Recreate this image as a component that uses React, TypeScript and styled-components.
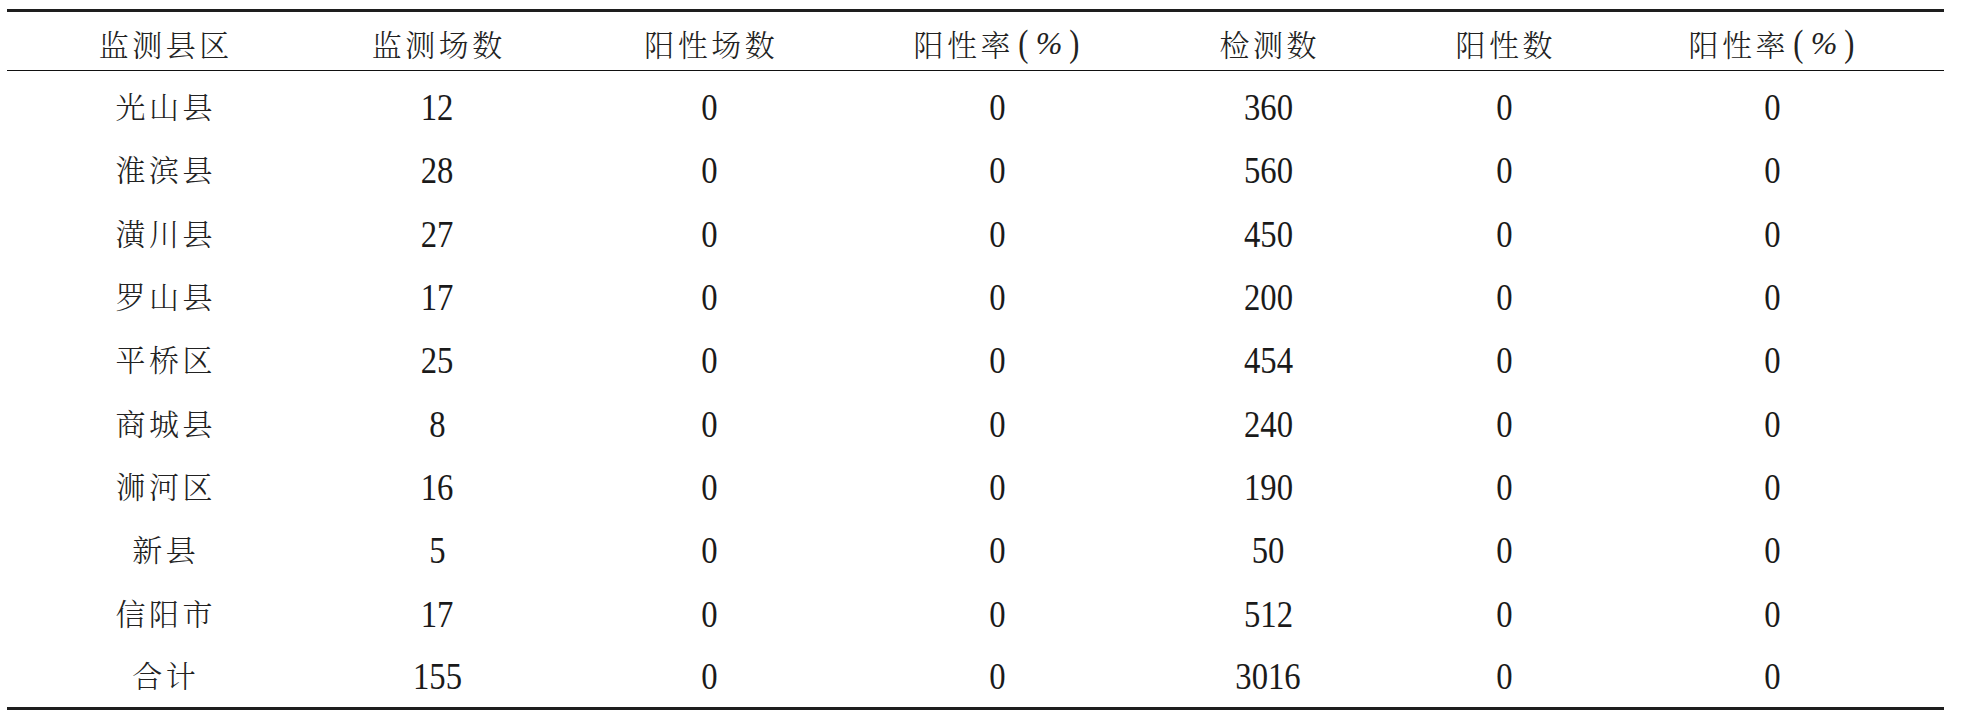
import React from "react";
import styled, { createGlobalStyle } from "styled-components";

const GlobalStyle = createGlobalStyle`
  html, body {
    margin: 0;
    padding: 0;
    background: #ffffff;
  }
  body {
    font-family: "Liberation Serif", "Noto Serif CJK SC", "Noto Sans CJK SC", serif;
    color: #1c1c1c;
  }
`;

const Page = styled.div`
  width: 1969px;
  height: 726px;
  padding: 9px 0 0 7px;
  box-sizing: border-box;
  background: #ffffff;
`;

const Table = styled.table`
  width: 1937px;
  table-layout: fixed;
  border-collapse: collapse;
  border-top: 3px solid #1e1e1e;
  border-bottom: 3px solid #1e1e1e;
`;

const HeadRow = styled.tr`
  height: 60px;
  border-bottom: 1px solid #111111;
`;

const BodyRow = styled.tr<{ $last?: boolean }>`
  height: ${(p) => (p.$last ? "68.33px" : "63.33px")};

  & > td {
    padding-bottom: ${(p) => (p.$last ? "5px" : "0")};
  }
`;

const HeadCell = styled.th`
  padding: 3px 0 0 0;
  font-weight: 300;
  text-align: center;
  vertical-align: middle;
  white-space: nowrap;
`;

const Cell = styled.td`
  padding-top: 6px;
  padding-left: 0;
  padding-right: 0;
  text-align: center;
  vertical-align: middle;
`;

const Han = styled.span`
  display: inline-block;
  font-family: "Noto Serif CJK SC", "Noto Sans CJK SC", sans-serif;
  font-size: 30px;
  font-weight: 300;
  letter-spacing: 3.5px;
  padding-left: 3.5px;
  line-height: 1;
  color: #222222;
  vertical-align: middle;
`;

const Num = styled.span`
  display: inline-block;
  font-family: "Liberation Serif", "Times New Roman", serif;
  font-size: 38px;
  line-height: 1;
  transform: scaleX(0.86);
  color: #1a1a1a;
  position: relative;
  top: 2px;
`;

const Paren = styled.span`
  display: inline-block;
  font-family: "Liberation Serif", serif;
  font-size: 38px;
  font-weight: 300;
  line-height: 1;
  transform: scaleX(0.8);
  color: #222222;
  vertical-align: middle;
  margin: 0 3px;
`;

const Pct = styled.span`
  display: inline-block;
  font-family: "Liberation Serif", serif;
  font-style: italic;
  font-size: 32px;
  font-weight: 400;
  line-height: 1;
  color: #222222;
  vertical-align: middle;
  margin: 0 3px;
`;

const widths = [314, 232, 313, 262, 280, 192, 344];

const rows: [string, string, string, string, string, string, string][] = [
  ["光山县", "12", "0", "0", "360", "0", "0"],
  ["淮滨县", "28", "0", "0", "560", "0", "0"],
  ["潢川县", "27", "0", "0", "450", "0", "0"],
  ["罗山县", "17", "0", "0", "200", "0", "0"],
  ["平桥区", "25", "0", "0", "454", "0", "0"],
  ["商城县", "8", "0", "0", "240", "0", "0"],
  ["浉河区", "16", "0", "0", "190", "0", "0"],
  ["新县", "5", "0", "0", "50", "0", "0"],
  ["信阳市", "17", "0", "0", "512", "0", "0"],
  ["合计", "155", "0", "0", "3016", "0", "0"],
];

const RateHead = () => (
  <>
    <Han>阳性率</Han>
    <Paren>(</Paren>
    <Pct>%</Pct>
    <Paren>)</Paren>
  </>
);

export default function App() {
  return (
    <Page>
      <GlobalStyle />
      <Table>
        <colgroup>
          {widths.map((w, i) => (
            <col key={i} style={{ width: w }} />
          ))}
        </colgroup>
        <thead>
          <HeadRow>
            <HeadCell><Han>监测县区</Han></HeadCell>
            <HeadCell><Han>监测场数</Han></HeadCell>
            <HeadCell><Han>阳性场数</Han></HeadCell>
            <HeadCell><RateHead /></HeadCell>
            <HeadCell><Han>检测数</Han></HeadCell>
            <HeadCell><Han>阳性数</Han></HeadCell>
            <HeadCell><RateHead /></HeadCell>
          </HeadRow>
        </thead>
        <tbody>
          {rows.map((r, i) => (
            <BodyRow key={r[0]} $last={i === rows.length - 1}>
              <Cell><Han>{r[0]}</Han></Cell>
              {r.slice(1).map((v, j) => (
                <Cell key={j}><Num>{v}</Num></Cell>
              ))}
            </BodyRow>
          ))}
        </tbody>
      </Table>
    </Page>
  );
}
